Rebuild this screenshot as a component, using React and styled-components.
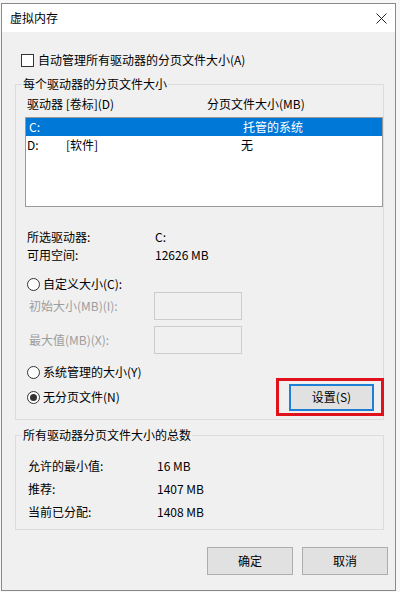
import React from 'react';
import styled, { createGlobalStyle } from 'styled-components';

const GlobalStyle = createGlobalStyle`
    html, body {
        margin: 0;
        padding: 0;
        background: #f7f7f7;
    }
    body {
        font-family: "Noto Sans CJK SC", "Noto Sans", sans-serif;
        font-size: 12px;
        line-height: 16px;
        color: #000;
    }
`;

const Window = styled.div`
    box-sizing: border-box;
    width: 395px;
    height: 588px;
    margin: 3px 0 0 1px;
    border: 1px solid #8a8a8a;
    display: flex;
    flex-direction: column;
    background: #f0f0f0;
`;

const TitleBar = styled.div`
    height: 28px;
    flex: none;
    display: flex;
    align-items: center;
    justify-content: space-between;
    padding: 0 8px 0 8px;
    background: #ffffff;
    font-size: 12px;
    color: #000;
`;

const Body = styled.div`
    flex: 1;
    padding: 0 7px 0 13px;
    display: flex;
    flex-direction: column;
`;

const CheckRow = styled.label`
    display: flex;
    align-items: center;
    gap: 4px;
    height: 16px;
    margin-top: 20px;
    padding-left: 6px;
`;

const CheckBox = styled.span`
    box-sizing: border-box;
    width: 13px;
    height: 13px;
    border: 1px solid #333;
    background: #fff;
    flex: none;
`;

const Group = styled.fieldset`
    box-sizing: border-box;
    width: 369px;
    margin: ${p => p.$top}px 0 0 0;
    padding: ${p => p.$padTop}px 0 ${p => p.$padBottom}px ${p => p.$padLeft}px;
    border: 1px solid #dcdcdc;
    min-width: 0;

    legend {
        padding: 0 1px;
        margin-left: ${p => -p.$padLeft + 6}px;
        line-height: 16px;
        color: #000;
    }
`;

const ColumnHeader = styled.div`
    display: grid;
    grid-template-columns: 180px 1fr;
    padding-left: 2px;
    height: 16px;
`;

const ListBox = styled.div`
    box-sizing: border-box;
    height: 90px;
    margin-top: 5px;
    border: 1px solid #9a9a9a;
    background: #fff;
`;

const ListRow = styled.div`
    display: grid;
    grid-template-columns: 39px 175px 1fr;
    align-items: center;
    height: 18px;
    padding-left: ${p => (p.$selected ? 3 : 1)}px;
    background: ${p => (p.$selected ? '#0078d7' : 'transparent')};
    color: ${p => (p.$selected ? '#fff' : '#000')};
`;

const InfoGrid = styled.div`
    display: grid;
    grid-template-columns: ${p => p.$labelWidth}px 1fr;
    grid-auto-rows: ${p => p.$row}px;
    align-items: center;
    margin-top: ${p => p.$top || 0}px;
    padding-left: ${p => p.$left}px;
`;

const RadioRow = styled.label`
    display: flex;
    align-items: center;
    gap: 3px;
    height: 16px;
    margin-top: ${p => p.$top}px;
    padding-left: 2px;
`;

const Radio = styled.span`
    box-sizing: border-box;
    width: 13px;
    height: 13px;
    border-radius: 50%;
    border: 1px solid #333;
    background: #fff;
    flex: none;
    display: flex;
    align-items: center;
    justify-content: center;

    &::after {
        content: '';
        width: 7px;
        height: 7px;
        border-radius: 50%;
        background: ${p => (p.$checked ? '#333' : 'transparent')};
    }
`;

const SizeRow = styled.div`
    display: grid;
    grid-template-columns: 125px 88px;
    align-items: center;
    height: 28px;
    margin-top: ${p => p.$top}px;
    padding-left: 4px;
    color: #9d9d9d;
`;

const DisabledInput = styled.div`
    box-sizing: border-box;
    height: 28px;
    border: 1px solid #cccccc;
    background: #f0f0f0;
`;

const LastRow = styled.div`
    display: flex;
    align-items: center;
    justify-content: space-between;
    margin-top: -2px;
    margin-right: -1px;
`;

const Highlight = styled.div`
    box-sizing: border-box;
    width: 108px;
    height: 38px;
    border: 3px solid #e0131d;
    padding: 1px 7px 1px 10px;
    display: flex;
    align-items: center;
`;

const Button = styled.button`
    box-sizing: border-box;
    width: ${p => p.$w || 86}px;
    height: ${p => p.$h || 28}px;
    margin: 0;
    padding: 0;
    font: inherit;
    color: #000;
    background: #e1e1e1;
    border: ${p => (p.$focused ? '2px solid #1f7fd6' : '1px solid #adadad')};
    cursor: default;
`;

const ButtonRow = styled.div`
    display: flex;
    justify-content: flex-end;
    gap: 9px;
    margin-top: 17px;
`;

function CloseIcon() {
    return (
        <svg width="11" height="11" viewBox="0 0 11 11">
            <path d="M0.5 0.5 L10.5 10.5 M10.5 0.5 L0.5 10.5" stroke="#222" strokeWidth="1" fill="none" />
        </svg>
    );
}

const drives = [
    { letter: 'C:', label: '', size: '托管的系统', selected: true },
    { letter: 'D:', label: '[软件]', size: '无', selected: false },
];

export default function App() {
    return (
        <>
            <GlobalStyle />
            <Window>
                <TitleBar>
                    <span>虚拟内存</span>
                    <CloseIcon />
                </TitleBar>
                <Body>
                    <CheckRow>
                        <CheckBox />
                        <span>自动管理所有驱动器的分页文件大小(A)</span>
                    </CheckRow>

                    <Group $top={8} $padTop={4} $padBottom={3} $padLeft={9}>
                        <legend>每个驱动器的分页文件大小</legend>
                        <ColumnHeader>
                            <span>驱动器 [卷标](D)</span>
                            <span>分页文件大小(MB)</span>
                        </ColumnHeader>
                        <ListBox>
                            {drives.map(d => (
                                <ListRow key={d.letter} $selected={d.selected}>
                                    <span>{d.letter}</span>
                                    <span>{d.label}</span>
                                    <span>{d.size}</span>
                                </ListRow>
                            ))}
                        </ListBox>

                        <InfoGrid $labelWidth={128} $row={18} $top={21} $left={2}>
                            <span>所选驱动器:</span>
                            <span>C:</span>
                            <span>可用空间:</span>
                            <span>12626 MB</span>
                        </InfoGrid>

                        <RadioRow $top={12}>
                            <Radio />
                            <span>自定义大小(C):</span>
                        </RadioRow>
                        <SizeRow $top={0}>
                            <span>初始大小(MB)(I):</span>
                            <DisabledInput />
                        </SizeRow>
                        <SizeRow $top={6}>
                            <span>最大值(MB)(X):</span>
                            <DisabledInput />
                        </SizeRow>
                        <RadioRow $top={10}>
                            <Radio />
                            <span>系统管理的大小(Y)</span>
                        </RadioRow>
                        <LastRow>
                            <RadioRow $top={0}>
                                <Radio $checked />
                                <span>无分页文件(N)</span>
                            </RadioRow>
                            <Highlight>
                                <Button $focused $w={85} $h={27}>设置(S)</Button>
                            </Highlight>
                        </LastRow>
                    </Group>

                    <Group $top={7} $padTop={11} $padBottom={6} $padLeft={12}>
                        <legend>所有驱动器分页文件大小的总数</legend>
                        <InfoGrid $labelWidth={129} $row={23} $left={0}>
                            <span>允许的最小值:</span>
                            <span>16 MB</span>
                            <span>推荐:</span>
                            <span>1407 MB</span>
                            <span>当前已分配:</span>
                            <span>1408 MB</span>
                        </InfoGrid>
                    </Group>

                    <ButtonRow>
                        <Button>确定</Button>
                        <Button>取消</Button>
                    </ButtonRow>
                </Body>
            </Window>
        </>
    );
}
